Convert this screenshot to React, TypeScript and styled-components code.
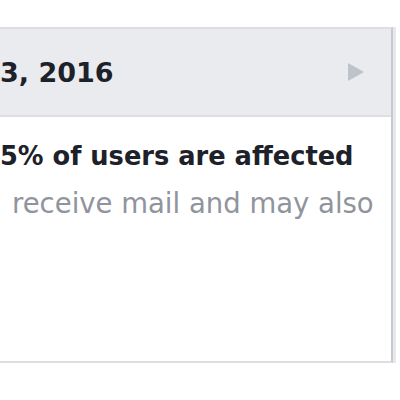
import React from "react";
import styled, { createGlobalStyle } from "styled-components";

const Global = createGlobalStyle`
  html, body { margin: 0; padding: 0; background: #ffffff; overflow: hidden; }
  body { width: 400px; height: 400px; font-family: "DejaVu Sans", "Lucida Grande", sans-serif; }
`;

const Page = styled.div`
  width: 400px;
  height: 400px;
  padding-top: 27px;
  box-sizing: border-box;
  overflow: hidden;
`;

const Card = styled.div`
  width: 393px;
  height: 336px;
  box-sizing: border-box;
  background: #ffffff;
  border-top: 2px solid #dcdee3;
  border-bottom: 2px solid #dcdee3;
  border-right: 2px solid #c6c9cf;
  box-shadow: 3px 0 0 #e6e8eb;
  display: flex;
  flex-direction: column;
`;

const Header = styled.div`
  height: 88px;
  flex: none;
  box-sizing: border-box;
  background: #e9ebee;
  border-bottom: 2px solid #dddfe2;
  display: flex;
  align-items: center;
  justify-content: space-between;
  padding-right: 26px;
`;

const Title = styled.div`
  font-weight: bold;
  font-size: 27px;
  color: #1d2129;
  white-space: nowrap;
`;

const Arrow = styled.svg`
  width: 18px;
  height: 20px;
  display: block;
`;

const Body = styled.div`
  padding-top: 24px;
  display: flex;
  flex-direction: column;
  gap: 16px;
`;

const Headline = styled.div<{ $indent: number }>`
  font-weight: bold;
  font-size: 25.7px;
  color: #1d2129;
  white-space: nowrap;
  margin-left: ${(p) => p.$indent}px;
`;

const Detail = styled.div<{ $indent: number }>`
  font-size: 27.5px;
  color: #90949c;
  white-space: nowrap;
  margin-left: ${(p) => p.$indent}px;
`;

export default function App() {
  return (
    <>
      <Global />
      <Page>
        <Card>
          <Header>
            <Title>3, 2016</Title>
            <Arrow viewBox="0 0 18 20">
              <polygon points="1,1 17,10 1,19" fill="#bec2c9" />
            </Arrow>
          </Header>
          <Body>
            <Headline $indent={0}>5% of users are affected</Headline>
            <Detail $indent={12}>receive mail and may also</Detail>
          </Body>
        </Card>
      </Page>
    </>
  );
}
